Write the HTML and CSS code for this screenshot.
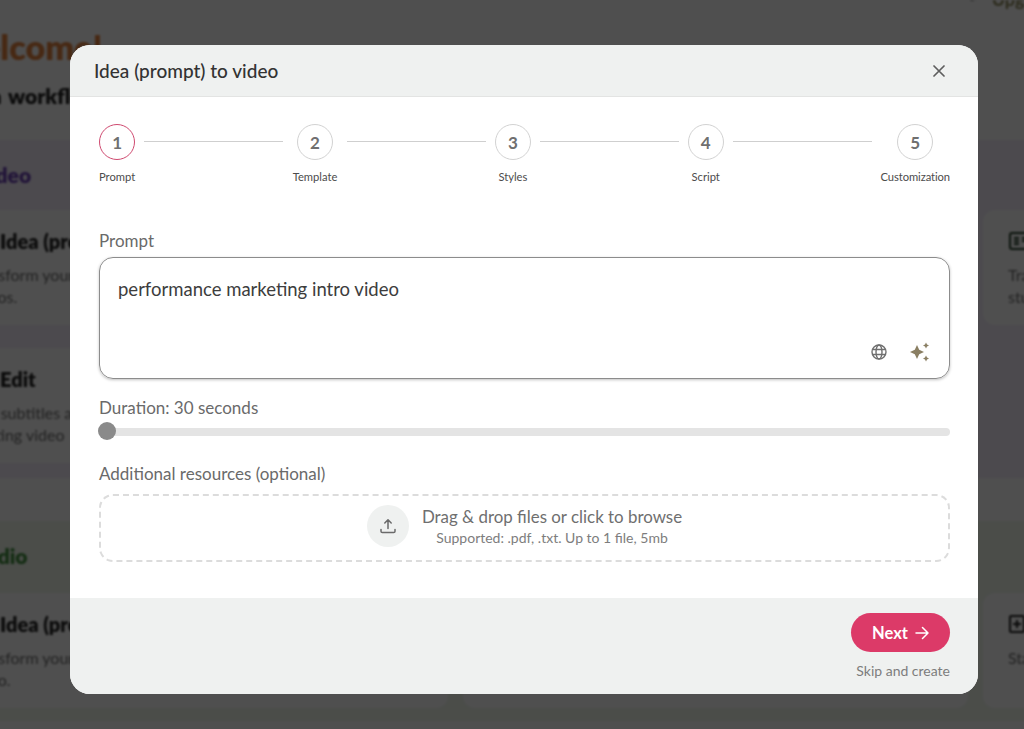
FILE: index.html
```html
<!DOCTYPE html>
<html lang="en">
<head>
<meta charset="utf-8">
<title>Idea (prompt) to video</title>
<link rel="stylesheet" href="styles.css">
</head>
<body>
<div class="page">
  <div class="topbar">
    <svg class="gear" viewBox="0 0 24 24" width="22" height="22"><circle cx="12" cy="12" r="8" fill="none" stroke="#2c2c2c" stroke-width="3" stroke-dasharray="4 2"/></svg>
    <span class="upgrade">Upgrade</span>
  </div>
  <h1 class="welcome">Welcome!</h1>
  <p class="subhead">Pick a workflow</p>
  <section class="band band-video">
    <h2 class="band-title title-video">Video</h2>
    <div class="cards">
      <div class="card">
        <div class="card-head"><svg class="card-icon" viewBox="0 0 24 18" width="24" height="18"><rect x="1" y="1" width="22" height="16" rx="2" fill="none" stroke="#222" stroke-width="2"/></svg><h3>Idea (prompt) to video</h3></div>
        <p>Transform your ideas into stunning<br>videos.</p>
      </div>
      <div class="card">
        <div class="card-head"><svg class="card-icon" viewBox="0 0 24 18" width="24" height="18"><rect x="1" y="1" width="22" height="16" rx="2" fill="none" stroke="#222" stroke-width="2"/></svg><h3>Script to video</h3></div>
        <p>Turn your script into a video.</p>
      </div>
      <div class="card">
        <div class="card-head"><svg class="card-icon" viewBox="0 0 24 18" width="24" height="18"><rect x="1" y="1" width="22" height="16" rx="2" fill="none" stroke="#233d26" stroke-width="2"/><path d="M5 6h5M5 9h5M5 12h5M13 6h6M13 9h6" stroke="#233d26" stroke-width="2"/></svg><h3>Article to video</h3></div>
        <p>Transform articles into<br>stunning videos.</p>
      </div>
      <div class="card">
        <div class="card-head"><svg class="card-icon" viewBox="0 0 24 18" width="24" height="18"><rect x="1" y="1" width="22" height="16" rx="2" fill="none" stroke="#222" stroke-width="2"/></svg><h3>Edit</h3></div>
        <p>Add subtitles and more to your<br>existing video</p>
      </div>
    </div>
  </section>
  <section class="band band-audio">
    <h2 class="band-title title-audio">Audio</h2>
    <div class="cards">
      <div class="card">
        <div class="card-head"><svg class="card-icon" viewBox="0 0 24 18" width="24" height="18"><rect x="1" y="1" width="22" height="16" rx="2" fill="none" stroke="#222" stroke-width="2"/></svg><h3>Idea (prompt) to audio</h3></div>
        <p>Transform your ideas into stunning<br>audio.</p>
      </div>
      <div class="card">
        <div class="card-head"><svg class="card-icon" viewBox="0 0 24 18" width="24" height="18"><rect x="1" y="1" width="22" height="16" rx="2" fill="none" stroke="#222" stroke-width="2"/></svg><h3>Script to audio</h3></div>
        <p>Turn your script into audio.</p>
      </div>
      <div class="card">
        <div class="card-head"><svg class="card-icon" viewBox="0 0 24 18" width="24" height="18"><rect x="1" y="1" width="14" height="16" rx="1" fill="none" stroke="#222" stroke-width="2"/><path d="M4 9h8M8 5v8" stroke="#222" stroke-width="2"/></svg><h3>New audio</h3></div>
        <p>Start from scratch.</p>
      </div>
    </div>
  </section>
</div>

<div class="overlay"></div>

<div class="modal">
  <header class="modal-head">
    <h2>Idea (prompt) to video</h2>
    <svg class="close" viewBox="0 0 12 12" width="12" height="12"><path d="M1 1l10 10M11 1L1 11" stroke="#5e5e5e" stroke-width="1.700" stroke-linecap="round"/></svg>
  </header>
  <div class="modal-body">
    <div class="stepper">
      <div class="step step-active"><span class="dot">1</span><span class="step-label">Prompt</span></div>
      <div class="line"></div>
      <div class="step step-template"><span class="dot">2</span><span class="step-label">Template</span></div>
      <div class="line"></div>
      <div class="step"><span class="dot">3</span><span class="step-label">Styles</span></div>
      <div class="line"></div>
      <div class="step"><span class="dot">4</span><span class="step-label">Script</span></div>
      <div class="line"></div>
      <div class="step step-last"><span class="dot">5</span><span class="step-label">Customization</span></div>
    </div>

    <div class="field-label label-prompt">Prompt</div>
    <div class="prompt-box">
      <div class="prompt-text">performance marketing intro video</div>
      <div class="prompt-tools">
        <svg viewBox="0 0 16 16" width="16" height="16" fill="none" stroke="#6f6f6f" stroke-width="1.400"><circle cx="8" cy="8" r="7"/><ellipse cx="8" cy="8" rx="3" ry="7"/><path d="M1.600 5.500h12.800M1.600 10.500h12.800"/></svg>
        <svg viewBox="0 0 22 22" width="22" height="22" fill="#8a7f63"><path d="M8 4L10.200 8.800 15 11 10.200 13.200 8 18 5.800 13.200 1 11 5.800 8.800z"/><path d="M17 1.500l1 2 2 1-2 1-1 2-1-2-2-1 2-1z"/><path d="M17 14.500l1 2 2 1-2 1-1 2-1-2-2-1 2-1z"/></svg>
      </div>
    </div>

    <div class="field-label label-duration">Duration: 30 seconds</div>
    <div class="slider"><span class="thumb"></span></div>

    <div class="field-label label-resources">Additional resources (optional)</div>
    <div class="dropzone">
      <span class="upload-circle">
        <svg viewBox="0 0 16 16" width="16" height="16" fill="none" stroke="#6a6a6a" stroke-width="1.500" stroke-linecap="round" stroke-linejoin="round"><path d="M8 10.500V2M4.800 5L8 1.800 11.200 5M1 11.500v1.700c0 .8.500 1.300 1.300 1.300h11.400c.8 0 1.300-.5 1.300-1.300v-1.700"/></svg>
      </span>
      <div class="drop-text">
        <div class="drop-main">Drag &amp; drop files or click to browse</div>
        <div class="drop-sub">Supported: .pdf, .txt. Up to 1 file, 5mb</div>
      </div>
    </div>
  </div>
  <footer class="modal-foot">
    <button class="next" type="button">Next
      <svg viewBox="0 0 14 14" width="14" height="14" fill="none" stroke="#fff" stroke-width="1.500" stroke-linecap="round" stroke-linejoin="round"><path d="M1 7h12M7.500 1.500L13 7l-5.500 5.500"/></svg>
    </button>
    <div class="skip">Skip and create</div>
  </footer>
</div>
</body>
</html>
```

FILE: styles.css
```css
* { box-sizing: border-box; }
html, body { margin: 0; padding: 0; height: 100%; overflow: hidden; }
body {
  font-family: "Lato", "Noto Sans", sans-serif;
  background: #ffffff;
  color: #222;
}

/* page behind the dialog */
.page {
  width: 1300px;
  height: 729px;
  margin-left: -104px;
  overflow: hidden;
  background: #fff;
  filter: blur(1px);
}
.topbar {
  height: 3px;
  display: flex;
  justify-content: flex-end;
  align-items: flex-end;
  gap: 8px;
  padding-right: 136px;
}
.gear { flex: none; }
.upgrade { font-size: 18px; font-weight: 700; line-height: 8px; color: #8e8a5a; }
.welcome {
  margin: 23px 0 0 52px;
  font-size: 34px;
  line-height: 42px;
  font-weight: 800;
  color: #e5833f;
}
.subhead {
  margin: 14px 0 0 47px;
  font-size: 21px;
  line-height: 28px;
  font-weight: 800;
  word-spacing: 2px;
}
.band { padding: 21px 47px 0; }
.band-video { margin-top: 30px; height: 338px; background: #f4eefb; }
.band-audio { margin-top: 43px; height: 200px; background: #f0f7ec; }
.band-title { margin: 0; font-size: 21px; line-height: 28px; font-weight: 800; }
.title-video { color: #6a3fb5; margin-left: 32px; }
.title-audio { color: #3f8f3c; margin-left: 28px; }
.cards {
  margin-top: 21px;
  display: grid;
  grid-template-columns: repeat(3, 505px);
  gap: 23px 15px;
}
.band-audio .cards { margin-top: 23px; }
.card {
  background: #fff;
  border-radius: 12px;
  height: 115px;
  padding: 17px 24px 0 25px;
}
.card-head { display: flex; align-items: center; gap: 8px; height: 28px; }
.card-icon { flex: none; margin-left: 1px; margin-right: -1px; }
.card h3 { margin: 0; font-size: 20px; line-height: 28px; font-weight: 800; white-space: nowrap; }
.card p { margin: 9px 0 0; font-size: 16px; line-height: 22px; color: #6d6d6d; }

.overlay {
  position: absolute;
  inset: 0;
  background: rgba(0, 0, 0, 0.69);
}

/* dialog */
.modal {
  position: absolute;
  left: 70px;
  top: 45px;
  width: 908px;
  height: 649px;
  display: flex;
  flex-direction: column;
  background: #fff;
  border-radius: 20px;
  overflow: hidden;
}
.modal-head {
  flex: none;
  height: 52px;
  padding: 0 33px 0 24px;
  display: flex;
  align-items: center;
  justify-content: space-between;
  background: #eff1f0;
  border-bottom: 1px solid #e3e4e3;
}
.modal-head h2 { margin: 0; font-size: 19px; font-weight: 500; color: #333; }
.close { flex: none; }

.modal-body { flex: 1; padding: 27px 28px 0 29px; }

.stepper { display: flex; align-items: flex-start; gap: 9px; height: 61px; }
.step { flex: none; min-width: 36px; display: flex; flex-direction: column; align-items: center; }
.step-template { min-width: 46px; }
.step-last .step-label { letter-spacing: -0.08px; }
.dot {
  width: 36px;
  height: 36px;
  border-radius: 50%;
  border: 1.5px solid #d2d2d2;
  display: flex;
  align-items: center;
  justify-content: center;
  font-size: 17px;
  font-weight: 700;
  color: #6f6f6f;
}
.step-active .dot { border-color: #cf4a70; }
.step-label { margin-top: 9px; font-size: 11.2px; line-height: 16px; color: #4c4c4c; white-space: nowrap; }
.line { flex: 1; height: 1px; margin-top: 17px; background: #cfcfcf; }

.field-label { font-size: 17px; line-height: 22px; color: #6a6a6a; }
.label-prompt { margin-top: 45px; }
.prompt-box {
  margin-top: 5px;
  height: 122px;
  border: 1px solid #8c8c8c;
  border-radius: 14px;
  box-shadow: 0 1px 3px rgba(0, 0, 0, 0.25);
  padding: 20px 18px 0;
  display: flex;
  flex-direction: column;
  justify-content: space-between;
}
.prompt-text { font-size: 18.5px; line-height: 22px; color: #3d3d3d; }
.prompt-tools { display: flex; justify-content: flex-end; align-items: center; gap: 22px; padding-bottom: 15px; }
.label-duration { margin-top: 18px; }
.slider {
  position: relative;
  margin-top: 9px;
  height: 8px;
  border-radius: 4px;
  background: #e4e4e4;
}
.thumb {
  position: absolute;
  left: -1px;
  top: -6px;
  width: 18px;
  height: 18px;
  border-radius: 50%;
  background: #8a8a8a;
}
.label-resources { margin-top: 27px; }
.dropzone {
  margin-top: 9px;
  height: 68px;
  border: 2px dashed #dcdcdc;
  border-radius: 14px;
  display: flex;
  align-items: center;
  justify-content: center;
  gap: 13px;
}
.upload-circle {
  flex: none;
  width: 42px;
  height: 42px;
  margin-bottom: 5px;
  border-radius: 50%;
  background: #eff1f0;
  display: flex;
  align-items: center;
  justify-content: center;
}
.drop-text { text-align: center; margin-bottom: 3px; }
.drop-main { font-size: 16.9px; line-height: 22px; color: #6f6f6f; }
.drop-sub { margin-top: 1px; font-size: 14px; line-height: 18px; color: #7d7d7d; }

.modal-foot {
  flex: none;
  height: 96px;
  padding: 15px 28px 0 0;
  display: flex;
  flex-direction: column;
  align-items: flex-end;
  background: #eff1f0;
}
.next {
  width: 99px;
  height: 39px;
  border: 0;
  border-radius: 20px;
  background: #dc3a68;
  color: #fff;
  font-family: inherit;
  font-size: 16.5px;
  font-weight: 700;
  display: flex;
  align-items: center;
  justify-content: center;
  gap: 7px;
  padding: 0;
}
.skip { margin-top: 10px; font-size: 14px; line-height: 18px; color: #7d7d7d; }
```
